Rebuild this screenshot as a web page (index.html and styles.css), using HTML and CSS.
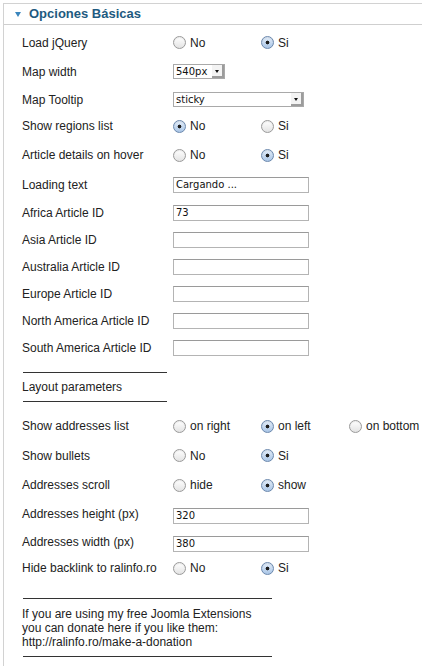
FILE: index.html
```html
<!DOCTYPE html>
<html>
<head>
<meta charset="utf-8">
<link rel="stylesheet" href="styles.css">
</head>
<body>
<div class="panel">
  <div class="head"><span class="tri"></span><span class="title">Opciones Básicas</span></div>
  <div class="body">
    <div class="row r1"><div class="lbl">Load jQuery</div><div class="opts"><label class="opt"><input type="radio" name="a"><span>No</span></label><label class="opt"><input type="radio" name="a" checked><span>Si</span></label></div></div>
    <div class="row r2"><div class="lbl">Map width</div><div class="sel w52"><span class="val">540px</span><span class="btn"><i></i></span></div></div>
    <div class="row r3"><div class="lbl">Map Tooltip</div><div class="sel w131"><span class="val">sticky</span><span class="btn"><i></i></span></div></div>
    <div class="row r4"><div class="lbl">Show regions list</div><div class="opts"><label class="opt"><input type="radio" name="b" checked><span>No</span></label><label class="opt"><input type="radio" name="b"><span>Si</span></label></div></div>
    <div class="row r5"><div class="lbl">Article details on hover</div><div class="opts"><label class="opt"><input type="radio" name="c"><span>No</span></label><label class="opt"><input type="radio" name="c" checked><span>Si</span></label></div></div>
    <div class="row r6"><div class="lbl">Loading text</div><input class="txt" type="text" value="Cargando ..."></div>
    <div class="row r7"><div class="lbl">Africa Article ID</div><input class="txt" type="text" value="73"></div>
    <div class="row r7"><div class="lbl">Asia Article ID</div><input class="txt" type="text" value=""></div>
    <div class="row r7"><div class="lbl">Australia Article ID</div><input class="txt" type="text" value=""></div>
    <div class="row r7"><div class="lbl">Europe Article ID</div><input class="txt" type="text" value=""></div>
    <div class="row r7"><div class="lbl">North America Article ID</div><input class="txt" type="text" value=""></div>
    <div class="row r7"><div class="lbl">South America Article ID</div><input class="txt" type="text" value=""></div>

    <div class="sec">
      <div class="rule short"></div>
      <div class="sectitle">Layout parameters</div>
      <div class="rule short"></div>
    </div>

    <div class="row r8"><div class="lbl">Show addresses list</div><div class="opts"><label class="opt"><input type="radio" name="d"><span>on right</span></label><label class="opt"><input type="radio" name="d" checked><span>on left</span></label><label class="opt"><input type="radio" name="d"><span>on bottom</span></label></div></div>
    <div class="row r9"><div class="lbl">Show bullets</div><div class="opts"><label class="opt"><input type="radio" name="e"><span>No</span></label><label class="opt"><input type="radio" name="e" checked><span>Si</span></label></div></div>
    <div class="row r10"><div class="lbl">Addresses scroll</div><div class="opts"><label class="opt"><input type="radio" name="f"><span>hide</span></label><label class="opt"><input type="radio" name="f" checked><span>show</span></label></div></div>
    <div class="row r11"><div class="lbl">Addresses height (px)</div><input class="txt low" type="text" value="320"></div>
    <div class="row r12"><div class="lbl">Addresses width (px)</div><input class="txt low" type="text" value="380"></div>
    <div class="row r13"><div class="lbl">Hide backlink to ralinfo.ro</div><div class="opts"><label class="opt"><input type="radio" name="g"><span>No</span></label><label class="opt"><input type="radio" name="g" checked><span>Si</span></label></div></div>

    <div class="donate">
      <div class="rule long"></div>
      <p class="note">If you are using my free Joomla Extensions<br>you can donate here if you like them:<br>http://ralinfo.ro/make-a-donation</p>
      <div class="rule long"></div>
    </div>
  </div>
</div>
</body>
</html>
```

FILE: styles.css
```css
html, body {
  margin: 0;
  padding: 0;
  background: #fff;
}
body {
  font-family: "Liberation Sans", Arial, sans-serif;
  font-size: 12px;
  color: #222;
  width: 422px;
  height: 666px;
  overflow: hidden;
}
.panel {
  margin: 3px 0 0 3px;
  border-left: 1px solid #d2d2d2;
  border-top: 1px solid #d2d2d2;
  height: 663px;
  box-sizing: border-box;
  overflow: hidden;
}
.head {
  height: 20px;
  border-bottom: 1px solid #cfcfcf;
  display: flex;
  align-items: center;
  padding-left: 11px;
}
.tri {
  width: 0;
  height: 0;
  border-left: 3px solid transparent;
  border-right: 3px solid transparent;
  border-top: 5px solid #3b86bd;
  margin-top: 1px;
  margin-right: 8px;
}
.title {
  font-weight: bold;
  font-size: 13px;
  color: #1e5a80;
  line-height: 20px;
}
.body {
  padding: 4px 0 0 18px;
}
.row {
  display: flex;
  align-items: center;
}
.lbl {
  width: 151px;
  flex: none;
  white-space: nowrap;
}
.r1 { height: 27px; }
.r2 { height: 31px; }
.r3 { height: 25px; }
.r4 { height: 28px; }
.r5 { height: 30px; }
.r6 { height: 29px; }
.r7 { height: 27px; }
.r8 { height: 28px; margin-top: 10px; }
.r9 { height: 31px; }
.r10 { height: 28px; }
.r11 { height: 29px; }
.r12 { height: 27px; }
.r13 { height: 26px; }

.opts {
  display: flex;
}
.opt {
  width: 88px;
  display: flex;
  align-items: center;
  white-space: nowrap;
}
.opt input {
  -webkit-appearance: none;
  appearance: none;
  width: 13px;
  height: 13px;
  margin: 0 4px 0 0;
  border-radius: 50%;
  border: 1px solid #9a9a9a;
  background: linear-gradient(#ffffff, #e3e3e3);
  box-shadow: inset 0 1px 1px rgba(0,0,0,0.08);
  box-sizing: border-box;
  position: relative;
  flex: none;
}
.opt input:checked {
  border-color: #6b88ad;
  background: radial-gradient(circle at 50% 50%, #1d1d1d 0, #1d1d1d 1.6px, transparent 2.2px), linear-gradient(#e4eefa, #a9c5e6);
}

.sel {
  height: 15px;
  border: 1px solid #a9a9a9;
  box-sizing: border-box;
  display: flex;
  background: #fff;
  font-family: "DejaVu Sans", Verdana, sans-serif;
  font-size: 10px;
  color: #111;
}
.w52 { width: 52px; }
.w131 { width: 131px; }
.val {
  flex: 1;
  padding-left: 2px;
  line-height: 13px;
}
.btn {
  width: 12px;
  flex: none;
  background: #f3f3f3;
  border-right: 2px solid #9c9c9c;
  border-bottom: 2px solid #9c9c9c;
  box-sizing: border-box;
  display: flex;
  align-items: center;
  justify-content: center;
}
.btn i {
  width: 0;
  height: 0;
  border-left: 2.5px solid transparent;
  border-right: 2.5px solid transparent;
  border-top: 3px solid #111;
  margin-top: 1px;
}

.txt {
  width: 136px;
  height: 16px;
  box-sizing: border-box;
  border: 1px solid #b4b4b4;
  border-top-color: #9a9a9a;
  margin: 0;
  padding: 0 2px;
  font-family: "DejaVu Sans", Verdana, sans-serif;
  font-size: 10px;
  color: #111;
  background: #fff;
  outline: none;
}
.low { margin-top: 4px; }

.sec {
  margin-top: 11px;
}
.rule {
  height: 1px;
  background: #333;
}
.short { width: 144px; margin-left: 1px; }
.long { width: 249px; margin-left: 1px; }
.sectitle {
  height: 28px;
  line-height: 29px;
}
.donate {
  margin-top: 17px;
}
.note {
  margin: 0;
  padding: 8px 0 7px;
  line-height: 14px;
}
```
